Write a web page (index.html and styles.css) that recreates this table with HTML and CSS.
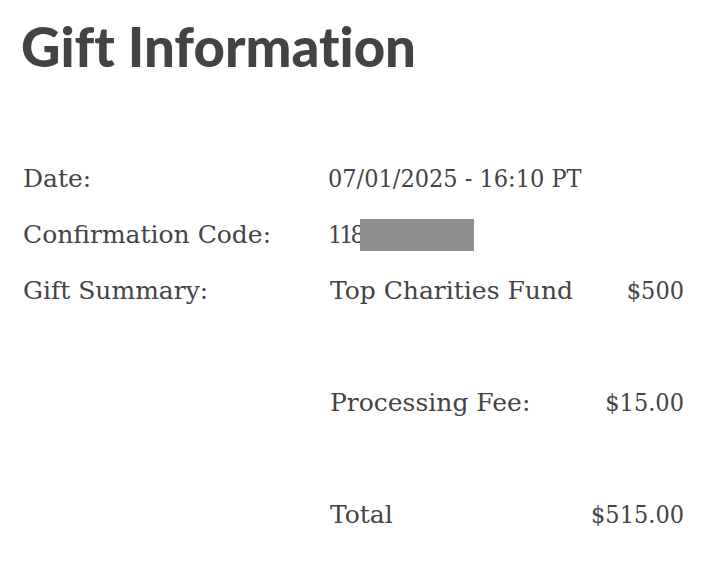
FILE: index.html
```html
<!DOCTYPE html>
<html>
<head>
<meta charset="utf-8">
<link rel="stylesheet" href="styles.css">
</head>
<body>
<div class="page">
  <h1 class="title">Gift Information</h1>
  <div class="details">
    <div class="label">Date:</div>
    <div class="value num">07/01/2025 - 16:10 PT</div>
    <div class="label">Confirmation Code:</div>
    <div class="value code num"><span class="code-start">118</span><span class="redact"></span></div>
    <div class="label">Gift Summary:</div>
    <div class="summary">
      <div class="item"><span>Top Charities Fund</span><span class="num">$500</span></div>
      <div class="item"><span>Processing Fee:</span><span class="num">$15.00</span></div>
      <div class="item"><span>Total</span><span class="num">$515.00</span></div>
    </div>
  </div>
</div>
</body>
</html>
```

FILE: styles.css
```css
html, body {
  margin: 0;
  padding: 0;
  background: #ffffff;
}
.page {
  padding: 14px 0 0 21px;
  color: #444444;
}
.title {
  margin: 0;
  font-family: Lato, "Open Sans", sans-serif;
  font-weight: 900;
  font-size: 54.5px;
  line-height: 64px;
  font-variant-ligatures: none;
  color: #434343;
}
.details {
  display: grid;
  grid-template-columns: 307px 356px;
  margin-top: 73px;
  font-family: "DejaVu Serif", serif;
  font-size: 25px;
  color: #444444;
}
.label, .value {
  line-height: 56px;
  height: 56px;
}
.label {
  padding-left: 2px;
}
.num {
  font-family: "DejaVu Serif Condensed", "DejaVu Serif", serif;
}
.code {
  display: flex;
  align-items: center;
}
.code-start {
  letter-spacing: -3px;
}
.redact {
  display: inline-block;
  width: 114px;
  height: 32px;
  background: #8f8f8f;
  margin-left: -2px;
}
.summary {
  display: flex;
  flex-direction: column;
  gap: 56px;
  padding-left: 2px;
}
.item {
  display: flex;
  justify-content: space-between;
  line-height: 56px;
}
```
